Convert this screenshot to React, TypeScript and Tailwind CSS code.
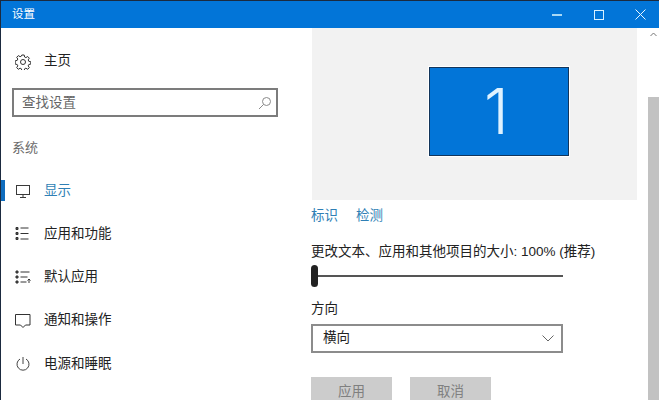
const cjk = "font-['Liberation_Sans','Noto_Sans_CJK_SC',sans-serif]";

function GearIcon() {
  return (
    <svg width="16" height="16" viewBox="0 0 16 16" fill="none" stroke="#333" strokeWidth="1">
      <circle cx="8" cy="8" r="2.5" />
      <path d="M6.800 1h2.400l.4 2 1.300.6 1.800-1.100 1.600 1.700-1.100 1.700.6 1.400 2 .4v2.400l-2 .4-.6 1.400 1.100 1.700-1.600 1.700-1.800-1.100-1.300.6-.4 2H6.800l-.4-2-1.300-.6-1.800 1.100-1.600-1.700 1.100-1.700-.6-1.400-2-.4V6.800l2-.4.6-1.400-1.100-1.700 1.600-1.700 1.800 1.100 1.300-.6z" />
    </svg>
  );
}

function DisplayIcon() {
  return (
    <svg width="16" height="16" viewBox="0 0 16 16" fill="none" stroke="#3a3a3a" strokeWidth="1">
      <rect x="1.500" y="2.500" width="13" height="9" />
      <path d="M8 11.500v2.500M5 14.500h6" />
    </svg>
  );
}

function AppsIcon() {
  return (
    <svg width="16" height="16" viewBox="0 0 16 16" fill="none" stroke="#333" strokeWidth="1">
      <path d="M1 1.500h2v2H1zM1 6.500h2v2H1zM1 11.500h2v2H1z" fill="#555" />
      <path d="M5.500 2h8M5.500 7.500h8M5.500 13h8" />
    </svg>
  );
}

function DefaultAppsIcon() {
  return (
    <svg width="16" height="16" viewBox="0 0 16 16" fill="none" stroke="#333" strokeWidth="1">
      <path d="M1 2h2v2H1zM1 7h2v2H1zM1 12h2v2H1z" fill="#555" />
      <path d="M5.500 3h9M5.500 8h7M5.500 13h6M14 14v-4M12.500 11.500 14 10l1.500 1.500" />
    </svg>
  );
}

function MessageIcon() {
  return (
    <svg width="16" height="16" viewBox="0 0 16 16" fill="none" stroke="#333" strokeWidth="1">
      <path d="M.500 1.500h14.500v10.500h-4.500L8 14.500 5.500 12H.500z" />
    </svg>
  );
}

function PowerIcon() {
  return (
    <svg width="16" height="16" viewBox="0 0 16 16" fill="none" stroke="#444" strokeWidth="1">
      <path d="M8 1v7M5 3A6 6 0 1 0 11 3" />
    </svg>
  );
}

function NavRow({ icon, label, active }: { icon?: React.ReactNode; label: string; active?: boolean }) {
  return (
    <div className="relative flex h-[43.300px] items-center pl-[14px]">
      {active ? <span className="absolute left-0 top-[11px] h-[21px] w-[4px] bg-[#0f6cbd]" /> : null}
      <span className="w-[29px] shrink-0">{icon}</span>
      <span className={`text-[13.500px] ${active ? "text-[#2f7fb5]" : "text-[#222]"}`}>{label}</span>
    </div>
  );
}

export default function App() {
  return (
    <div className={`flex h-[400px] w-[659px] flex-col overflow-hidden border-t border-l border-[#1b2a3f] bg-white ${cjk}`}>
      <header className="flex h-[27px] shrink-0 items-center justify-between bg-[#0275d8] pl-[11px] text-white">
        <span className="text-[11.500px]">设置</span>
        <div className="flex items-center">
          <span className="mr-[32px] h-[2px] w-[10px] bg-[#a8d8f5]" />
          <span className="mr-[31px] size-[10px] border border-[#d8f0ff]" />
          <svg className="mr-[13px]" width="11" height="11" viewBox="0 0 11 11" stroke="#e8f6ff" strokeWidth="1">
            <path d="M.500.500l10 10M10.500.500l-10 10" />
          </svg>
        </div>
      </header>

      <div className="flex min-h-0 flex-1">
        <aside className="w-[310px] shrink-0">
          <div className="mt-[17px] flex h-[33px] items-center pl-[14px]">
            <span className="w-[29px] shrink-0"><GearIcon /></span>
            <span className="text-[13.500px] text-[#222]">主页</span>
          </div>
          <div className="ml-[11px] mt-[10px] flex h-[29px] w-[266px] items-center justify-between border-2 border-[#7c7c7c] pl-[8px] pr-[4px]">
            <span className="pt-[1px] text-[13.500px] text-[#666]">查找设置</span>
            <svg width="14" height="14" viewBox="0 0 14 14" fill="none" stroke="#8a8a8a" strokeWidth="1">
              <circle cx="8.500" cy="5.500" r="4" />
              <path d="M5.500 8.500 1 13" />
            </svg>
          </div>
          <p className="ml-[11px] mt-[21px] text-[13px] leading-[20px] text-[#6a6a6a]">系统</p>
          <div className="mt-[11px]">
            <NavRow active icon={<DisplayIcon />} label="显示" />
            <NavRow icon={<AppsIcon />} label="应用和功能" />
            <NavRow icon={<DefaultAppsIcon />} label="默认应用" />
            <NavRow icon={<MessageIcon />} label="通知和操作" />
            <NavRow icon={<PowerIcon />} label="电源和睡眠" />
          </div>
        </aside>

        <main className="w-[326px] shrink-0">
          <div className="ml-[1px] h-[172px] w-[325px] bg-[#f2f2f2] pl-[117px] pt-[39px]">
            <div className="flex h-[89px] w-[140px] items-center justify-center border border-[#12355b] bg-[#0275d8] pr-[5px] shadow-[0_0_0_1px_#fff]">
              <span className="font-['Inter',sans-serif] text-[63px] font-light leading-none text-[#dff2ff]">1</span>
            </div>
          </div>
          <div className="mt-[7px] flex gap-[18px] text-[13.500px] leading-[18px] text-[#2f7fb5]">
            <span>标识</span>
            <span>检测</span>
          </div>
          <p className="mt-[18px] text-[13.500px] leading-[18px] text-[#222]">更改文本、应用和其他项目的大小: 100% (推荐)</p>
          <div className="relative mt-[4px] flex h-[22px] w-[252px] items-center">
            <span className="h-[2px] w-full bg-[#555]" />
            <span className="absolute left-0 top-0 h-[22px] w-[7px] rounded-full bg-[#222]" />
          </div>
          <p className="mt-[13px] text-[13.500px] leading-[18px] text-[#222]">方向</p>
          <div className="mt-[6px] flex h-[29px] w-[252px] items-center justify-between border-2 border-[#8c8c8c] pl-[10px] pr-[7px]">
            <span className="text-[13.500px] text-[#222]">横向</span>
            <svg width="12" height="7" viewBox="0 0 12 7" fill="none" stroke="#666" strokeWidth="1">
              <path d="M.500.500 6 6 11.500.500" />
            </svg>
          </div>
          <div className="mt-[24px] flex gap-[18px]">
            <button className="h-[30px] w-[81px] bg-[#cccccc] text-[13.500px] text-[#7f7f7f]">应用</button>
            <button className="h-[30px] w-[81px] bg-[#cccccc] text-[13.500px] text-[#7f7f7f]">取消</button>
          </div>
        </main>

        <div className="ml-[11px] flex w-[11px] shrink-0 flex-col">
          <div className="flex h-[69px] justify-center pt-[4px]">
            <svg width="7" height="5" viewBox="0 0 7 5" fill="none" stroke="#777" strokeWidth="1">
              <path d="M.500 4 3.500 1l3 3" />
            </svg>
          </div>
          <div className="flex-1 bg-[#c2c2c2]" />
        </div>
      </div>
    </div>
  );
}
